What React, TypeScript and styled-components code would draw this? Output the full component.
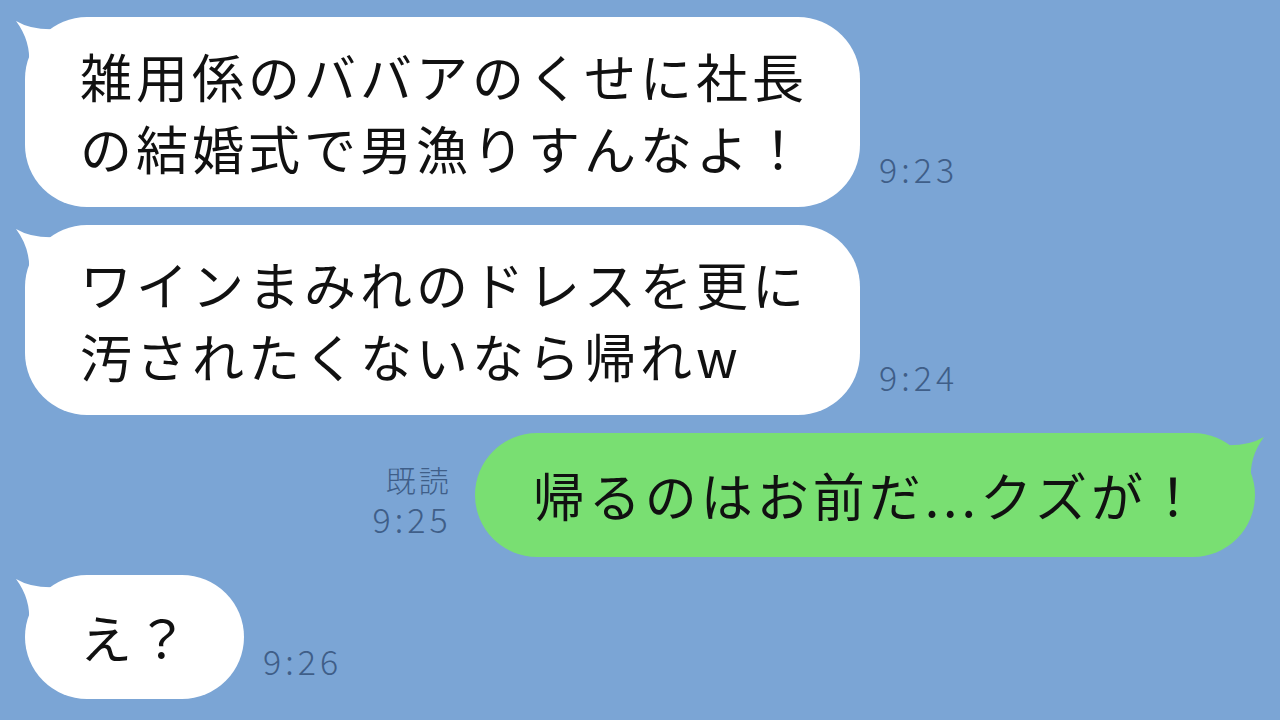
import React from 'react';
import styled, { createGlobalStyle } from 'styled-components';

const GlobalStyle = createGlobalStyle`
  html, body {
    margin: 0;
    padding: 0;
    background: #7ba5d5;
  }
  body {
    font-family: "Noto Sans CJK JP", "Noto Sans", sans-serif;
  }
`;

const Screen = styled.div`
  width: 1280px;
  height: 720px;
  overflow: hidden;
  background: #7ba5d5;
  box-sizing: border-box;
  padding: 17px 25px 0 25px;
  display: flex;
  flex-direction: column;
  gap: 18px;
`;

const Row = styled.div<{ $mine?: boolean }>`
  display: flex;
  align-items: flex-end;
  justify-content: ${({ $mine }) => ($mine ? 'flex-end' : 'flex-start')};
  gap: ${({ $mine }) => ($mine ? '23px' : '19px')};
`;

const Bubble = styled.div<{ $mine?: boolean; $single?: boolean }>`
  position: relative;
  background: ${({ $mine }) => ($mine ? '#79df72' : '#ffffff')};
  border-radius: 62px;
  padding: ${({ $single }) => ($single ? '26px' : '23px')}
    ${({ $mine }) => ($mine ? '52px' : '52px')} ${({ $single }) => ($single ? '26px' : '23px')}
    ${({ $mine }) => ($mine ? '58px' : '55px')};
  color: #111;
  font-size: 52px;
  font-weight: 400;
  letter-spacing: 4px;
  line-height: 72px;
  white-space: pre;
`;

const Tail = styled.svg<{ $mine?: boolean }>`
  position: absolute;
  top: 0;
  width: 52px;
  height: 52px;
  ${({ $mine }) => ($mine ? 'right: -10px; transform: scaleX(-1);' : 'left: -10px;')}
`;

const Meta = styled.div<{ $mine?: boolean }>`
  display: flex;
  flex-direction: column;
  gap: 3px;
  align-items: ${({ $mine }) => ($mine ? 'flex-end' : 'flex-start')};
  margin-bottom: 19px;
  color: #3f5e88;
  font-weight: 300;
`;

const Read = styled.span`
  font-size: 30px;
  letter-spacing: 3px;
  line-height: 36px;
`;

const Time = styled.span`
  font-size: 34px;
  letter-spacing: 4px;
  line-height: 38px;
`;

type Msg = {
  text: string;
  time: string;
  mine?: boolean;
  read?: boolean;
};

const messages: Msg[] = [
  { text: '雑用係のババアのくせに社長\nの結婚式で男漁りすんなよ！', time: '9:23' },
  { text: 'ワインまみれのドレスを更に\n汚されたくないなら帰れw', time: '9:24' },
  { text: '帰るのはお前だ...クズが！', time: '9:25', mine: true, read: true },
  { text: 'え？', time: '9:26' },
];

const BubbleTail: React.FC<{ mine?: boolean; color: string }> = ({ mine, color }) => (
  <Tail $mine={mine} viewBox="0 0 52 52">
    <path d="M1 4 Q18 14 44 12 L44 48 L14 48 Q16 24 1 4 Z" fill={color} />
  </Tail>
);

const App: React.FC = () => (
  <>
    <GlobalStyle />
    <Screen>
      {messages.map((m) => (
        <Row key={m.time} $mine={m.mine}>
          {m.mine && (
            <Meta $mine>
              {m.read && <Read>既読</Read>}
              <Time>{m.time}</Time>
            </Meta>
          )}
          <Bubble $mine={m.mine} $single={!m.text.includes('\n')}>
            <BubbleTail mine={m.mine} color={m.mine ? '#79df72' : '#ffffff'} />
            {m.text}
          </Bubble>
          {!m.mine && (
            <Meta>
              <Time>{m.time}</Time>
            </Meta>
          )}
        </Row>
      ))}
    </Screen>
  </>
);

export default App;
